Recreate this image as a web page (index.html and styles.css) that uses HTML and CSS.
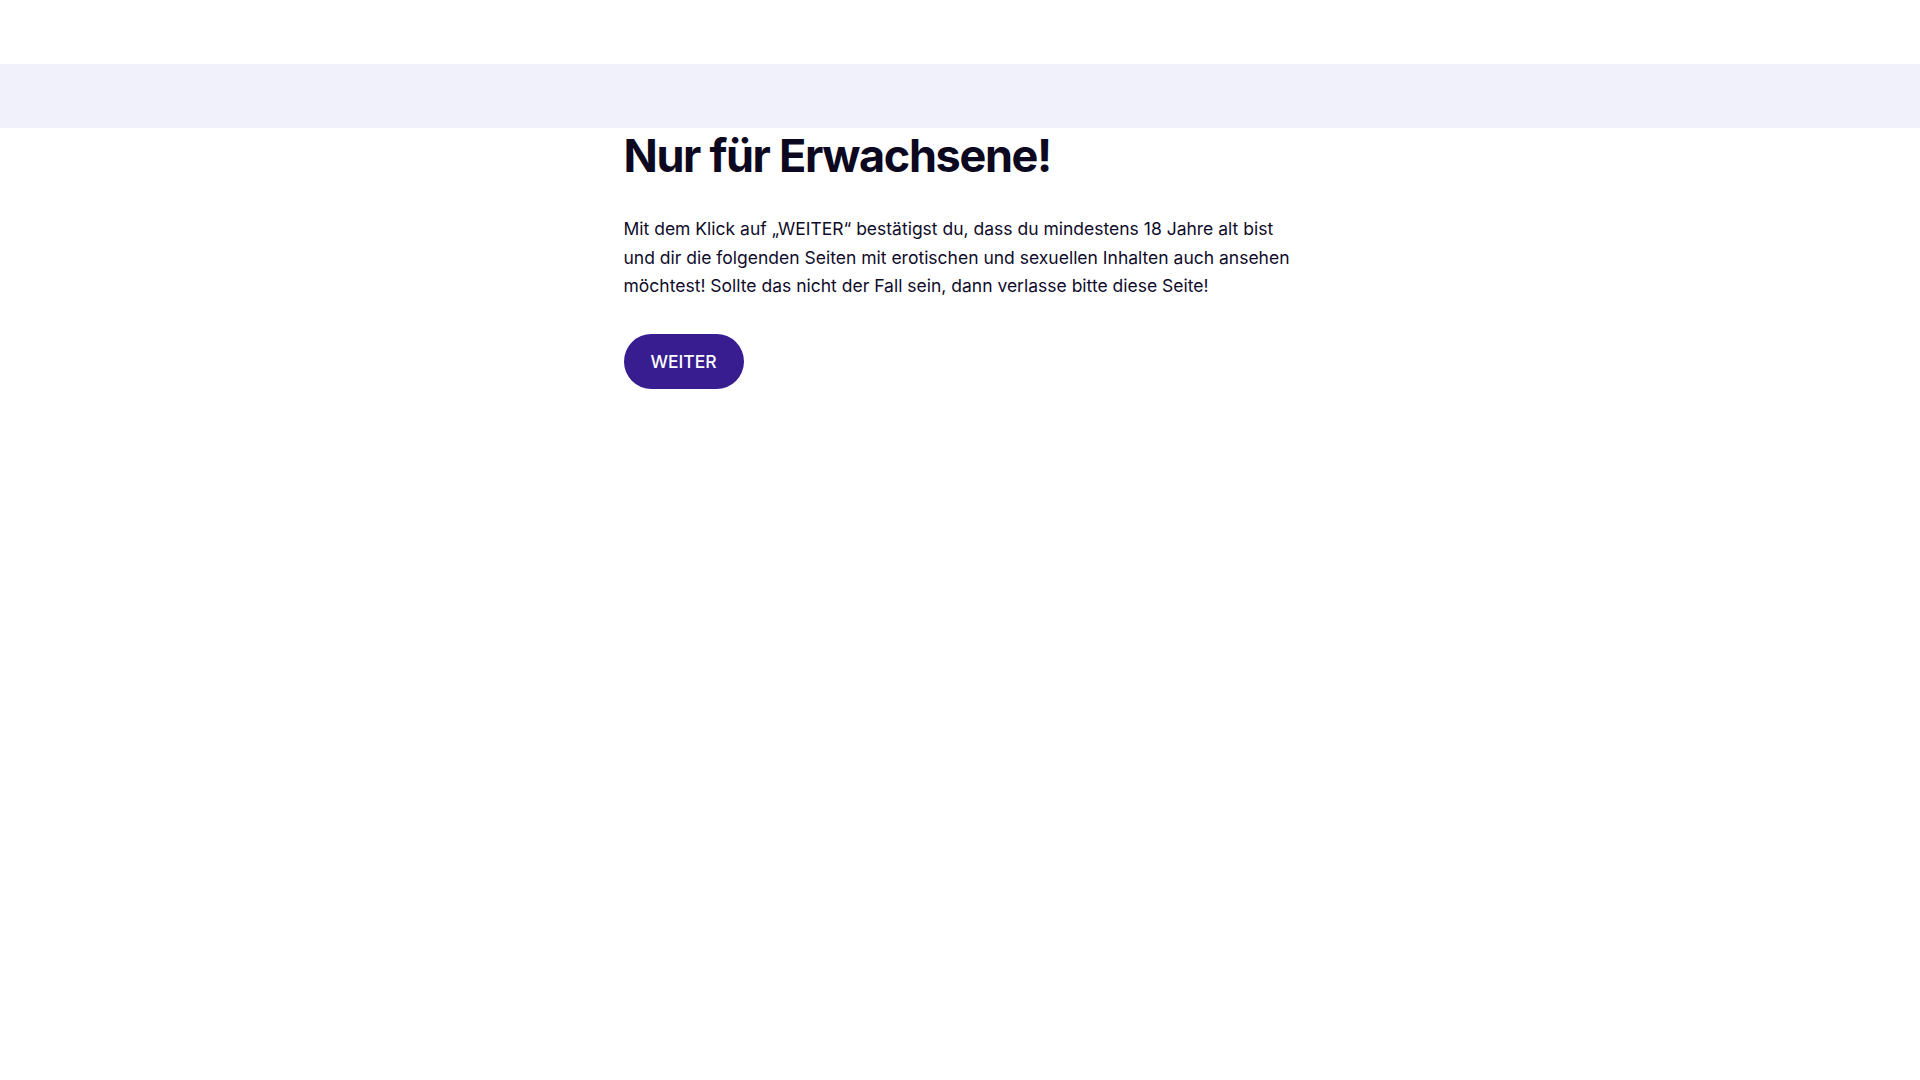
FILE: index.html
```html
<!DOCTYPE html>
<html lang="de">
<head>
<meta charset="utf-8">
<title>Nur für Erwachsene!</title>
<link rel="stylesheet" href="styles.css">
</head>
<body>
<header class="top"></header>
<div class="band"></div>
<main class="content">
  <h1 class="title">Nur für Erwachsene!</h1>
  <p class="text">Mit dem Klick auf „WEITER“ bestätigst du, dass du mindestens 18 Jahre alt bist und dir die folgenden Seiten mit erotischen und sexuellen Inhalten auch ansehen möchtest! Sollte das nicht der Fall sein, dann verlasse bitte diese Seite!</p>
  <button class="btn" type="button">WEITER</button>
</main>
</body>
</html>
```
FILE: styles.css
```css
html, body {
  margin: 0;
  padding: 0;
  background: #ffffff;
}
body {
  font-family: Inter, "Noto Sans", sans-serif;
  color: #0f0c2b;
}
.top {
  height: 64px;
}
.band {
  height: 64px;
  background: #f0f1fa;
}
.content {
  width: 674px;
  margin: 0 auto;
  padding-left: 1px;
}
.title {
  margin: 0;
  font-size: 45px;
  line-height: 1.25;
  font-weight: 700;
  letter-spacing: -0.03em;
  color: #0b0820;
}
.text {
  margin: 31px 0 0;
  font-size: 17.5px;
  line-height: 28.5px;
}
.btn {
  display: block;
  margin-top: 33px;
  height: 55px;
  padding: 0 27px;
  border: none;
  border-radius: 28px;
  background: #371d8f;
  color: #ffffff;
  font-family: Inter, "Noto Sans", sans-serif;
  font-size: 17.5px;
  font-weight: 500;
  cursor: pointer;
}
```
